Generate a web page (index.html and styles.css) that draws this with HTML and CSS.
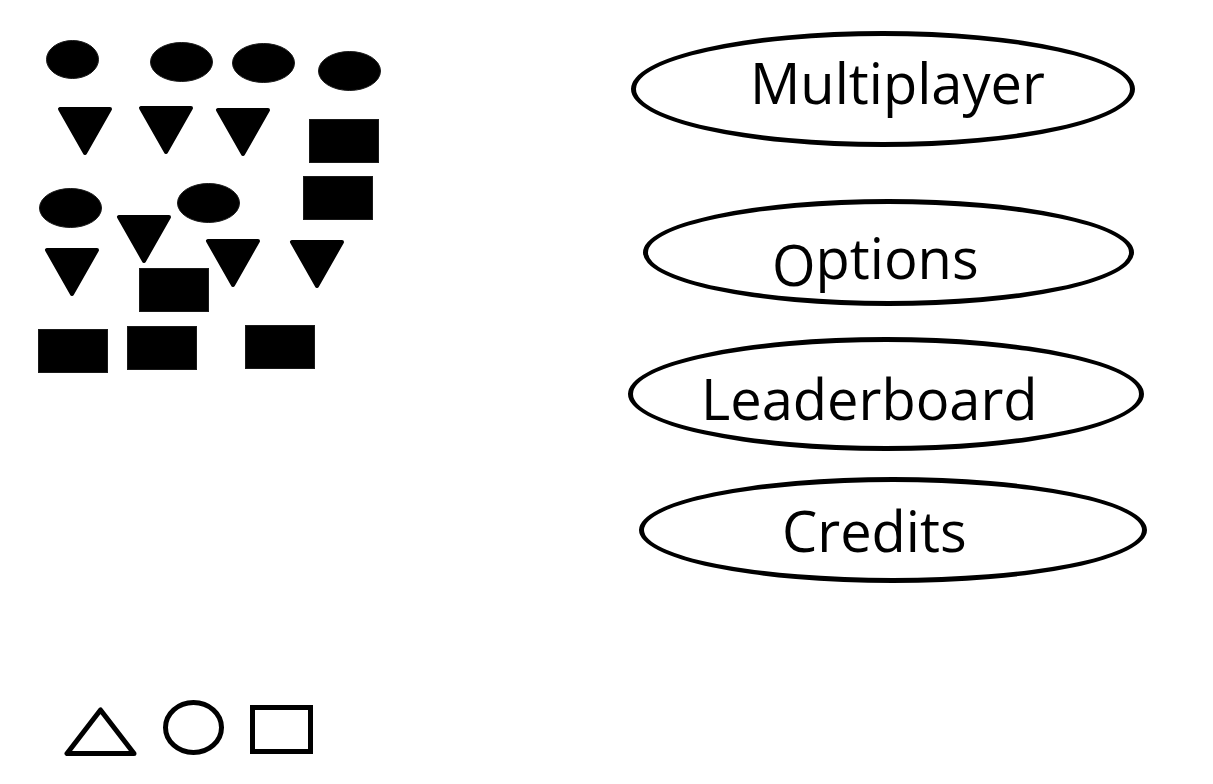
FILE: index.html
```html
<!DOCTYPE html>
<html lang="en">
<head>
<meta charset="utf-8">
<title>Main menu</title>
<link rel="stylesheet" href="styles.css">
</head>
<body>
<main class="screen">
  <section class="board">
    <svg class="pieces" width="344" height="334" viewBox="38 40 344 334" role="img" aria-label="Shape pieces">
      <defs>
        <ellipse id="oval" rx="31" ry="19.5"/>
        <path id="wedge" d="M2 2H52L27 46Z"/>
        <rect id="block" x="0.5" y="0.5" width="69" height="43"/>
      </defs>
      <ellipse cx="72.5" cy="59.5" rx="26" ry="19"/>
      <use href="#oval" x="181.5" y="62"/>
      <use href="#oval" x="263.5" y="63"/>
      <use href="#oval" x="349.5" y="71"/>
      <use href="#oval" x="70.5" y="208"/>
      <use href="#oval" x="208.5" y="203"/>
      <g class="wedges">
        <use href="#wedge" x="58" y="107"/>
        <use href="#wedge" x="139" y="106"/>
        <use href="#wedge" x="216" y="108"/>
        <use href="#wedge" x="117" y="215"/>
        <use href="#wedge" x="45" y="248"/>
        <use href="#wedge" x="206" y="239"/>
        <use href="#wedge" x="290" y="240"/>
      </g>
      <use href="#block" x="309" y="119"/>
      <use href="#block" x="303" y="176"/>
      <use href="#block" x="139" y="268"/>
      <use href="#block" x="38" y="329"/>
      <use href="#block" x="127" y="326"/>
      <use href="#block" x="245" y="325"/>
    </svg>
    <div class="picker">
      <svg class="outline" width="73" height="49" viewBox="0 0 73 49"><path d="M3 46.500H70L36.500 3Z"/></svg>
      <svg class="outline" width="61" height="56" viewBox="0 0 61 56"><ellipse cx="30.500" cy="27.500" rx="28" ry="25"/></svg>
      <svg class="outline square" width="63" height="51" viewBox="0 0 63 51"><rect x="2.500" y="2.500" width="58" height="44"/></svg>
    </div>
  </section>
  <nav class="menu">
    <button class="item multiplayer" type="button">Multiplayer</button>
    <button class="item options" type="button"><span class="initial">O</span>ptions</button>
    <button class="item leaderboard" type="button">Leaderboard</button>
    <button class="item credits" type="button">Credits</button>
  </nav>
</main>
</body>
</html>
```
FILE: styles.css
```css
* {
  box-sizing: border-box;
}

body {
  margin: 0;
  background: #fff;
  color: #000;
  font-family: "Open Sans", "Noto Sans", sans-serif;
}

.screen {
  display: grid;
  grid-template-columns: 1fr 520px;
  min-height: 100vh;
  padding: 31px 65px 28px 38px;
}

.board {
  display: flex;
  flex-direction: column;
  justify-content: space-between;
  padding-top: 9px;
}

.pieces {
  fill: #000;
  stroke: #1a1a1a;
  stroke-width: 1;
}

.wedges {
  stroke: #000;
  stroke-width: 4;
  stroke-linejoin: round;
}

.picker {
  display: flex;
  align-items: flex-end;
  gap: 26px;
  padding-left: 26px;
}

.outline {
  fill: none;
  stroke: #000;
  stroke-width: 5;
  stroke-linejoin: round;
}

.square {
  stroke-linejoin: miter;
}

.menu {
  display: flex;
  flex-direction: column;
  align-items: flex-start;
}

.item {
  display: flex;
  align-items: flex-start;
  max-width: 100%;
  padding: 0;
  border: 5px solid #000;
  border-radius: 50%;
  background: none;
  color: inherit;
  font-family: inherit;
  font-size: 56px;
  font-weight: 500;
  line-height: 64px;
  text-align: left;
  white-space: nowrap;
}

.multiplayer {
  width: 504px;
  height: 116px;
  margin-left: 3px;
  padding: 14px 0 0 114px;
}

.options {
  width: 491px;
  height: 107px;
  margin: 52px 0 0 15px;
  padding: 21px 0 0 124px;
}

.initial {
  padding-top: 7px;
}

.leaderboard {
  width: 516px;
  height: 114px;
  margin-top: 31px;
  padding: 24px 0 0 68px;
}

.credits {
  width: 508px;
  height: 106px;
  margin: 26px 0 0 11px;
  padding: 16px 0 0 138px;
}
```
